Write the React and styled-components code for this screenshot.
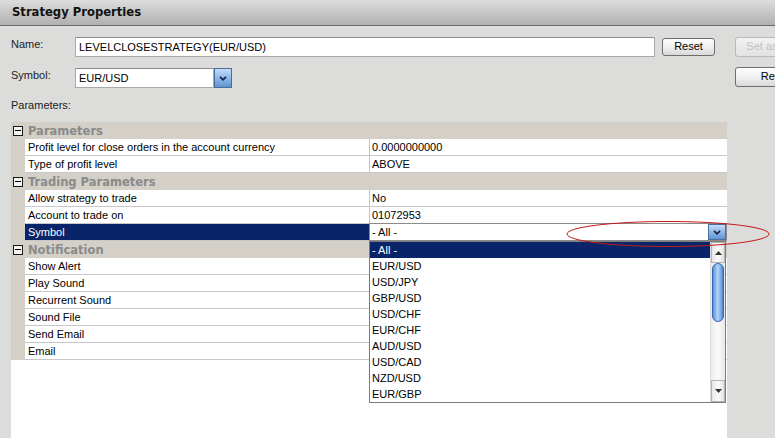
// Libraries
import React from "react";
import styled, { createGlobalStyle } from "styled-components";

// Data
const sections = [
    {
        title: "Parameters",
        rows: [
            { label: "Profit level for close orders in the account currency", value: "0.0000000000" },
            { label: "Type of profit level", value: "ABOVE" },
        ],
    },
    {
        title: "Trading Parameters",
        rows: [
            { label: "Allow strategy to trade", value: "No" },
            { label: "Account to trade on", value: "01072953" },
            { label: "Symbol", value: "- All -", editing: true },
        ],
    },
    {
        title: "Notification",
        rows: [
            { label: "Show Alert", value: "" },
            { label: "Play Sound", value: "" },
            { label: "Recurrent Sound", value: "" },
            { label: "Sound File", value: "" },
            { label: "Send Email", value: "" },
            { label: "Email", value: "" },
        ],
    },
];

const symbols = ["- All -", "EUR/USD", "USD/JPY", "GBP/USD", "USD/CHF", "EUR/CHF", "AUD/USD", "USD/CAD", "NZD/USD", "EUR/GBP"];

// Styled
const GlobalStyle = createGlobalStyle`
    html, body {
        margin: 0;
        padding: 0;
    }
    body {
        background: #dcdddb;
        font-family: "Liberation Sans", Arial, sans-serif;
        font-size: 11px;
        color: #000;
        overflow: hidden;
    }
    * {
        box-sizing: border-box;
    }
`;

const Window = styled.div`
    position: relative;
    width: 775px;
    height: 438px;
    display: flex;
    flex-direction: column;
    overflow: hidden;
    background: #dcdddb;
`;

const TitleBar = styled.div`
    flex: none;
    height: 26px;
    padding-left: 12px;
    background: linear-gradient(#dddddd, #c6c6c6 50%, #b0b0b0);
    border-bottom: 1px solid #6c6c6c;
    font-family: "DejaVu Sans", Verdana, sans-serif;
    font-weight: bold;
    font-size: 11.6px;
    line-height: 25px;
    color: #111;
`;

const Body = styled.div`
    flex: 1;
    display: flex;
    min-height: 0;
`;

const Main = styled.div`
    flex: none;
    width: 727px;
    padding: 11px 0 0 11px;
    display: flex;
    flex-direction: column;
`;

const FormRow = styled.div`
    display: flex;
    align-items: flex-start;
    height: 20px;
    margin-bottom: ${(p) => p.gap}px;
`;

const FieldLabel = styled.div`
    width: 64px;
    line-height: 14px;
    color: #222;
`;

const TextBox = styled.div`
    width: ${(p) => p.width}px;
    height: 20px;
    padding-left: 3px;
    background: #fff;
    border: 1px solid #a9a9a9;
    border-top-color: #8c8c8c;
    line-height: 18px;
    white-space: nowrap;
    overflow: hidden;
`;

const Button = styled.div`
    flex: none;
    width: ${(p) => p.width}px;
    height: ${(p) => p.height}px;
    margin: ${(p) => p.margin || "0"};
    border: 1px solid ${(p) => (p.disabled ? "#b9b9b9" : "#6e6e6e")};
    border-radius: 3px;
    background: ${(p) =>
        p.disabled ? "linear-gradient(#f2f2f2, #e2e2e2)" : "linear-gradient(#fefefe, #eeeeee 55%, #d8d8d8)"};
    color: ${(p) => (p.disabled ? "#c2c2c2" : "#000")};
    text-align: center;
    line-height: ${(p) => p.height - 3}px;
    white-space: nowrap;
    overflow: hidden;
`;

const Select = styled.div`
    display: flex;
    width: 157px;
    height: 20px;
`;

const ArrowButton = styled.div`
    flex: none;
    width: ${(p) => p.width}px;
    display: flex;
    align-items: center;
    justify-content: center;
    background: linear-gradient(#c4dcf6, #8fb8e6 50%, #5f95d3);
    border: 1px solid #4b6f9c;
`;

const SectionLabel = styled.div`
    line-height: 14px;
    margin-bottom: 10px;
    color: #222;
`;

const Grid = styled.div`
    flex: 1;
    background: #fff;
    display: flex;
    flex-direction: column;
`;

const CategoryRow = styled.div`
    display: flex;
    align-items: center;
    height: 17px;
    background: #d4d0c8;
    font-family: "DejaVu Sans", Verdana, sans-serif;
    font-weight: bold;
    font-size: 11.5px;
    color: #8a8a8a;
`;

const ExpandBox = styled.div`
    position: relative;
    width: 10px;
    height: 10px;
    margin: 0 5px 0 2px;
    border: 1px solid #1a1a1a;
    background: #f4f2ee;

    &::after {
        content: "";
        position: absolute;
        left: 1px;
        top: 3.5px;
        width: 6px;
        height: 1px;
        background: #000;
    }
`;

const PropRow = styled.div`
    display: flex;
    height: 17px;
`;

const Gutter = styled.div`
    flex: none;
    width: 14px;
    background: #d4d0c8;
`;

const LabelCell = styled.div`
    flex: none;
    width: 345px;
    padding-left: 3px;
    border-right: 1px solid #c4c4c4;
    border-bottom: 1px solid #c8c8c8;
    background: ${(p) => (p.selected ? "#0a246a" : "#fff")};
    color: ${(p) => (p.selected ? "#fff" : "#000")};
    line-height: 16px;
    white-space: nowrap;
`;

const ValueCell = styled.div`
    flex: 1;
    position: relative;
    padding-left: 2px;
    border-bottom: 1px solid #c8c8c8;
    line-height: 16px;
    white-space: nowrap;
`;

const Editor = styled.div`
    position: absolute;
    left: -1px;
    right: 0;
    top: -1px;
    height: 18px;
    display: flex;
    background: #fff;
    border: 1px solid #8a8a8a;
`;

const EditorText = styled.div`
    flex: 1;
    padding-left: 2px;
    line-height: 16px;
`;

const DropList = styled.div`
    position: absolute;
    left: -1px;
    top: 17px;
    width: 357px;
    height: 162px;
    display: flex;
    background: #fff;
    border: 1px solid #7c7c7c;
    z-index: 2;
`;

const Items = styled.div`
    flex: 1;
`;

const Item = styled.div`
    height: 16px;
    line-height: 16px;
    padding-left: 2px;
    background: ${(p) => (p.active ? "#0a246a" : "#fff")};
    color: ${(p) => (p.active ? "#fff" : "#000")};
`;

const ScrollBar = styled.div`
    flex: none;
    width: 15px;
    display: flex;
    flex-direction: column;
    background: linear-gradient(90deg, #ececec, #fafafa 50%, #e8e8e8);
    border-left: 1px solid #d8d8d8;
`;

const ScrollButton = styled.div`
    flex: none;
    height: ${(p) => p.height}px;
    display: flex;
    align-items: center;
    justify-content: center;
    background: linear-gradient(90deg, #e6e6e6, #fbfbfb 50%, #e2e2e2);
    border: 1px solid #b4b4b4;
`;

const Thumb = styled.div`
    flex: none;
    height: 59px;
    margin: 0 1px;
    border: 1px solid #3567b5;
    border-radius: 7px;
    background: linear-gradient(90deg, #5b90d8, #b1d1f5 45%, #8db8ea 70%, #4d82cc);
`;

const Track = styled.div`
    flex: 1;
`;

const Side = styled.div`
    flex: none;
    padding: 11px 0 0 8px;
    display: flex;
    flex-direction: column;
    gap: 10px;
`;

const Annotation = styled.svg`
    position: absolute;
    left: 560px;
    top: 214px;
    pointer-events: none;
    z-index: 3;
`;

// Icons
const Chevron = () => (
    <svg width="8" height="5" viewBox="0 0 8 5">
        <path d="M1 0.8 L4 3.8 L7 0.8" fill="none" stroke="#14234a" strokeWidth="1.7" />
    </svg>
);

const Triangle = ({ up }) => (
    <svg width="7" height="4" viewBox="0 0 7 4">
        <path d={up ? "M0 4 L3.5 0 L7 4 Z" : "M0 0 L7 0 L3.5 4 Z"} fill="#333" />
    </svg>
);

const SymbolDropdown = () => (
    <DropList>
        <Items>
            {symbols.map((s, i) => (
                <Item key={s} active={i === 0}>
                    {s}
                </Item>
            ))}
        </Items>
        <ScrollBar>
            <ScrollButton height={21}>
                <Triangle up />
            </ScrollButton>
            <Thumb />
            <Track />
            <ScrollButton height={22}>
                <Triangle />
            </ScrollButton>
        </ScrollBar>
    </DropList>
);

const App = () => (
    <Window>
        <GlobalStyle />
        <TitleBar>Strategy Properties</TitleBar>
        <Body>
            <Main>
                <FormRow gap={11}>
                    <FieldLabel>Name:</FieldLabel>
                    <TextBox width={580}>LEVELCLOSESTRATEGY(EUR/USD)</TextBox>
                    <Button width={53} height={18} margin="1px 0 0 7px">
                        Reset
                    </Button>
                </FormRow>
                <FormRow gap={10}>
                    <FieldLabel>Symbol:</FieldLabel>
                    <Select>
                        <TextBox width={139}>EUR/USD</TextBox>
                        <ArrowButton width={18}>
                            <Chevron />
                        </ArrowButton>
                    </Select>
                </FormRow>
                <SectionLabel>Parameters:</SectionLabel>
                <Grid>
                    {sections.map((section) => (
                        <React.Fragment key={section.title}>
                            <CategoryRow>
                                <ExpandBox />
                                {section.title}
                            </CategoryRow>
                            {section.rows.map((row) => (
                                <PropRow key={row.label}>
                                    <Gutter />
                                    <LabelCell selected={row.editing}>{row.label}</LabelCell>
                                    <ValueCell>
                                        {row.editing ? (
                                            <>
                                                <Editor>
                                                    <EditorText>{row.value}</EditorText>
                                                    <ArrowButton width={18}>
                                                        <Chevron />
                                                    </ArrowButton>
                                                </Editor>
                                                <SymbolDropdown />
                                            </>
                                        ) : (
                                            row.value
                                        )}
                                    </ValueCell>
                                </PropRow>
                            ))}
                        </React.Fragment>
                    ))}
                </Grid>
            </Main>
            <Side>
                <Button width={90} height={20} disabled>
                    Set as default
                </Button>
                <Button width={90} height={20}>
                    Refresh
                </Button>
            </Side>
        </Body>
        <Annotation width="215" height="42" viewBox="0 0 215 42">
            <ellipse cx="108" cy="20" rx="101" ry="12.5" fill="none" stroke="#c41a1a" strokeWidth="1" />
        </Annotation>
    </Window>
);

export default App;
